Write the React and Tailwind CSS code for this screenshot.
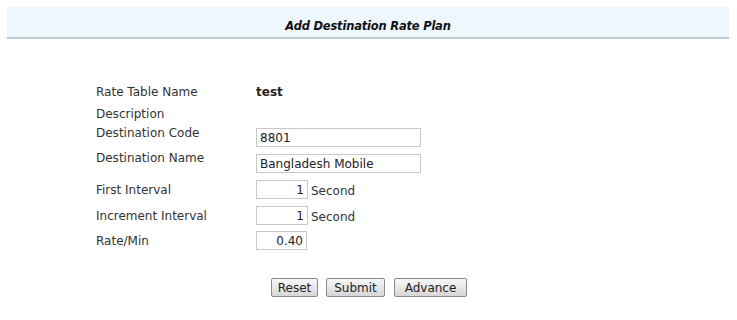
import React from "react";

const labelCls = "w-[160px] shrink-0 text-[#333]";
const inputCls =
  "border border-[#c8c8c8] bg-white px-[3px] text-[12px] text-[#222] outline-none";

function Btn({ children, w }) {
  return (
    <button
      className={`h-[19px] ${w} rounded-[2px] border border-[#8a8a8a] bg-gradient-to-b from-[#f8f8f8] to-[#d6d6d6] text-[12px] text-[#222] leading-none`}
    >
      {children}
    </button>
  );
}

export default function App() {
  return (
    <div
      className="h-[320px] w-[737px] bg-white pt-[7px]"
      style={{ fontFamily: '"DejaVu Sans", Verdana, sans-serif' }}
    >
      {/* Header */}
      <div className="ml-[7px] mr-[8px] flex h-[32px] items-center justify-center border-b-2 border-[#c6cbd2] bg-[#eef6fe] pt-[7px]">
        <h1 className="text-[11.5px] font-bold italic leading-[14px] tracking-[-0.2px] text-[#111]">
          Add Destination Rate Plan
        </h1>
      </div>

      {/* Form */}
      <div className="pl-[96px] pt-[46px] text-[12px] leading-[14px]">
        <div className="flex h-[22px] items-start">
          <span className={labelCls}>Rate Table Name</span>
          <span className="font-bold text-[#222]">test</span>
        </div>
        <div className="flex h-[19px] items-start">
          <span className={labelCls}>Description</span>
        </div>
        <div className="flex h-[25px] items-start">
          <span className={labelCls}>Destination Code</span>
          <input
            className={`${inputCls} mt-[2px] h-[19px] w-[165px]`}
            defaultValue="8801"
            readOnly
          />
        </div>
        <div className="flex h-[29px] items-start">
          <span className={labelCls}>Destination Name</span>
          <input
            className={`${inputCls} mt-[3px] h-[19px] w-[165px]`}
            defaultValue="Bangladesh Mobile"
            readOnly
          />
        </div>
        <div className="flex h-[26px] items-start">
          <span className={`${labelCls} pt-[3px]`}>First Interval</span>
          <input className={`${inputCls} h-[19px] w-[52px] text-right`} defaultValue="1" readOnly />
          <span className="ml-[3px] pt-[4px] text-[#333]">Second</span>
        </div>
        <div className="flex h-[25px] items-start">
          <span className={`${labelCls} pt-[3px]`}>Increment Interval</span>
          <input className={`${inputCls} h-[19px] w-[52px] text-right`} defaultValue="1" readOnly />
          <span className="ml-[3px] pt-[4px] text-[#333]">Second</span>
        </div>
        <div className="flex h-[19px] items-start">
          <span className={`${labelCls} pt-[3px]`}>Rate/Min</span>
          <input className={`${inputCls} h-[19px] w-[51px] text-right`} defaultValue="0.40" readOnly />
        </div>
      </div>

      {/* Buttons */}
      <div className="mt-[28px] flex pl-[271px]">
        <Btn w="w-[47px]">Reset</Btn>
        <div className="w-[8px]" />
        <Btn w="w-[59px]">Submit</Btn>
        <div className="w-[9px]" />
        <Btn w="w-[73px]">Advance</Btn>
      </div>
    </div>
  );
}
